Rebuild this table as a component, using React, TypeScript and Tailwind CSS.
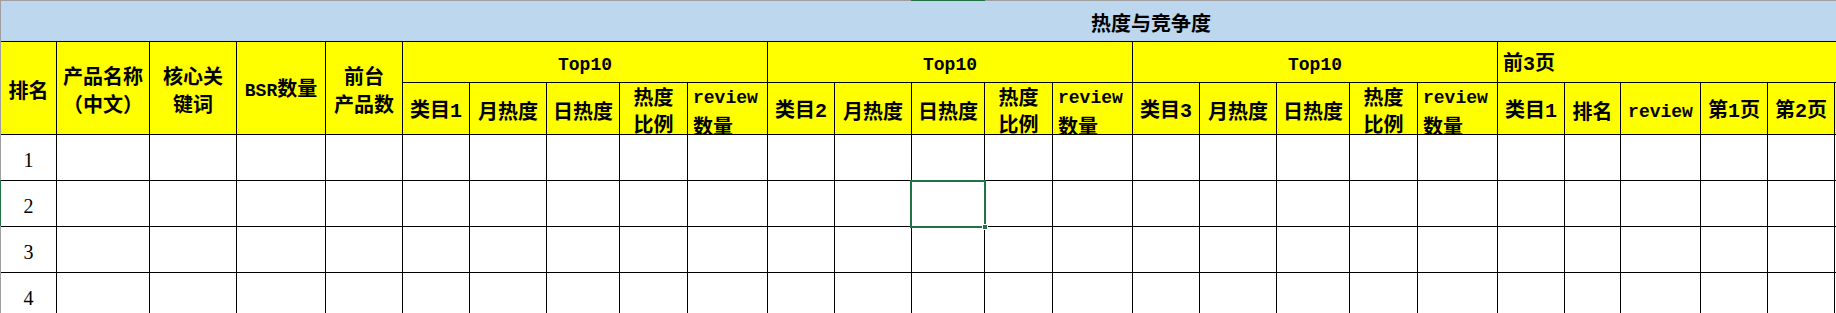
import React from "react";

const COLS =
  "grid-cols-[56px_93px_87px_89px_77px_67px_77px_73px_68px_80px_67px_77px_73px_68px_80px_67px_77px_73px_68px_80px_67px_56px_80px_67px_67px_40px]";

function Mixed({ text }: { text: string }) {
  const hasCjk = /[^\x00-\x7f]/.test(text);
  const parts = text.split(/([A-Za-z0-9]+)/);
  return (
    <>
      {parts.map((p, i) =>
        /^[A-Za-z0-9]+$/.test(p) ? (
          <span
            key={i}
            className={
              hasCjk && /^[0-9]+$/.test(p)
                ? "font-['Liberation_Mono',monospace] text-[20px]"
                : "font-['Liberation_Mono',monospace] text-[18px]"
            }
          >
            {p}
          </span>
        ) : p ? (
          <span key={i}>{p}</span>
        ) : null
      )}
    </>
  );
}

function H({
  lines,
  className = "",
  left = false,
}: {
  lines: string[];
  className?: string;
  left?: boolean;
}) {
  return (
    <div
      className={`bg-[#ffff00] border-r border-b border-black flex items-center pt-[3px] overflow-visible ${
        left ? "justify-start pl-[5px]" : "justify-center"
      } ${className}`}
    >
      <div className={`flex flex-col leading-[28px] whitespace-nowrap ${left ? "items-start" : "items-center"}`}>
        {lines.map((l, i) => (
          <div key={i}>
            <Mixed text={l} />
          </div>
        ))}
      </div>
    </div>
  );
}

type Sub = { lines: string[]; left?: boolean };

export default function App() {
  const group = (n: number): Sub[] => [
    { lines: [`类目${n}`] },
    { lines: ["月热度"] },
    { lines: ["日热度"] },
    { lines: ["热度", "比例"] },
    { lines: ["review", "数量"], left: true },
  ];
  const subs: Sub[] = [
    ...group(1),
    ...group(2),
    ...group(3),
    { lines: ["类目1"] },
    { lines: ["排名"] },
    { lines: ["review"] },
    { lines: ["第1页"] },
    { lines: ["第2页"] },
    { lines: [] },
  ];

  return (
    <div className="w-[1836px] h-[313px] overflow-hidden flex bg-white text-black font-['Noto_Sans_CJK_SC',sans-serif] text-[20px] font-bold">
      <div className="w-px shrink-0 flex flex-col">
        <div className="h-[180px] bg-[#9f9f9f]" />
        <div className="h-[46px] bg-[#217346]" />
        <div className="flex-1 bg-[#9f9f9f]" />
      </div>
      <div className="flex-1 min-w-0 flex flex-col overflow-hidden">
        <div className="h-px shrink-0 flex">
          <div className="w-[910px] bg-[#9f9f9f]" />
          <div className="w-[74px] bg-[#217346]" />
          <div className="flex-1 bg-[#9f9f9f]" />
        </div>
        <div className="h-[40px] shrink-0 bg-[#bdd7ee] flex items-center pl-[1090px] pt-[3px] leading-none whitespace-nowrap">
          热度与竞争度
        </div>
        <div
          className={`grid ${COLS} grid-rows-[41px_52px_46px_46px_46px_46px] border-t border-black w-max`}
        >
          <H lines={["排名"]} className="row-span-2" />
          <H lines={["产品名称", "（中文）"]} className="row-span-2" />
          <H lines={["核心关", "键词"]} className="row-span-2" />
          <H lines={["BSR数量"]} className="row-span-2" />
          <H lines={["前台", "产品数"]} className="row-span-2" />
          <H lines={["Top10"]} className="col-span-5" />
          <H lines={["Top10"]} className="col-span-5" />
          <H lines={["Top10"]} className="col-span-5" />
          <H lines={["前3页"]} className="col-span-6" left />
          {subs.map((s, i) => (
            <div
              key={`s${i}`}
              className={`bg-[#ffff00] border-r border-b border-black flex items-center pt-[3px] ${
                s.left ? "justify-start pl-[5px]" : "justify-center"
              }`}
            >
              <div
                className={`flex flex-col leading-[27px] whitespace-nowrap ${
                  s.left ? "items-start" : "items-center"
                }`}
              >
                {s.lines.map((l, j) => (
                  <div key={j}>
                    <Mixed text={l} />
                  </div>
                ))}
              </div>
            </div>
          ))}
          {[1, 2, 3, 4].map((r) =>
            Array.from({ length: 26 }).map((_, c) => {
              const selected = r === 2 && c === 12;
              return (
                <div
                  key={`r${r}c${c}`}
                  className={`bg-white border-r border-b border-black flex items-center justify-center ${
                    selected ? "relative" : ""
                  }`}
                >
                  {c === 0 && (
                    <span className="font-['Liberation_Serif',serif] font-normal text-[20px] leading-none pt-[4px]">
                      {r}
                    </span>
                  )}
                  {selected && (
                    <>
                      <div className="absolute left-[-2px] top-[-1px] w-[76px] h-[48px] border-2 border-[#217346]" />
                      <div className="absolute left-[70px] top-[43px] w-[6px] h-[6px] bg-[#217346] border border-white" />
                    </>
                  )}
                </div>
              );
            })
          )}
        </div>
      </div>
    </div>
  );
}
